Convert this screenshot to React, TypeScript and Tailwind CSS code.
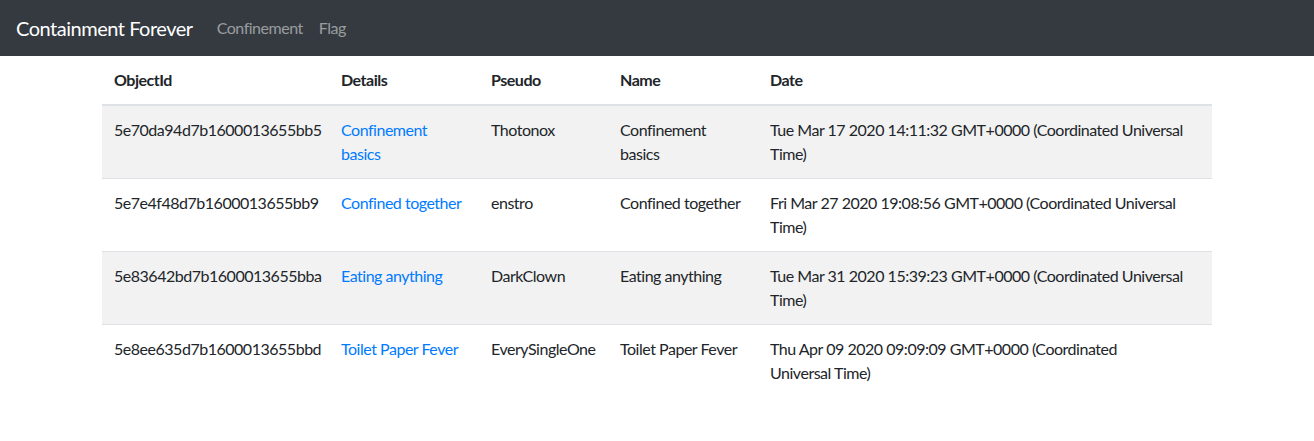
import React from 'react';

type Row = { id: string; details: string; pseudo: string; name: string; date: React.ReactNode };

const rows: Row[] = [
  { id: '5e70da94d7b1600013655bb5', details: 'Confinement basics', pseudo: 'Thotonox', name: 'Confinement basics', date: 'Tue Mar 17 2020 14:11:32 GMT+0000 (Coordinated Universal Time)' },
  { id: '5e7e4f48d7b1600013655bb9', details: 'Confined together', pseudo: 'enstro', name: 'Confined together', date: 'Fri Mar 27 2020 19:08:56 GMT+0000 (Coordinated Universal Time)' },
  { id: '5e83642bd7b1600013655bba', details: 'Eating anything', pseudo: 'DarkClown', name: 'Eating anything', date: 'Tue Mar 31 2020 15:39:23 GMT+0000 (Coordinated Universal Time)' },
  { id: '5e8ee635d7b1600013655bbd', details: 'Toilet Paper Fever', pseudo: 'EverySingleOne', name: 'Toilet Paper Fever', date: <>Thu Apr 09 2020 09:09:09 GMT+0000 (Coordinated<br />Universal Time)</> },
];

const App: React.FC = () => {
  return (
    <div className="min-h-screen bg-white text-[#212529] text-base leading-6 tracking-[-0.03em] font-['Lato',sans-serif]">
      <nav className="bg-[#343a40] h-14 px-4 flex items-center">
        <a href="#" className="text-white text-xl leading-[30px] py-[5px] mr-4">Containment Forever</a>
        <div className="flex">
          <a href="#" className="px-2 text-white/50">Confinement</a>
          <a href="#" className="px-2 text-white/50">Flag</a>
        </div>
      </nav>

      <div className="max-w-[1140px] mx-auto px-[15px]">
        <table className="w-full table-fixed border-collapse">
          <colgroup>
            <col className="w-[227px]" />
            <col className="w-[150px]" />
            <col className="w-[129px]" />
            <col className="w-[150px]" />
            <col />
          </colgroup>
          <thead>
            <tr>
              {['ObjectId', 'Details', 'Pseudo', 'Name', 'Date'].map(h => (
                <th key={h} className="p-3 text-left font-bold align-bottom border-b-2 border-[#dee2e6]">{h}</th>
              ))}
            </tr>
          </thead>
          <tbody>
            {rows.map((r, i) => (
              <tr key={r.id} className={i % 2 === 0 ? 'bg-[#f2f2f2]' : ''}>
                <td className="p-3 align-top border-t border-[#dee2e6]">{r.id}</td>
                <td className="p-3 align-top border-t border-[#dee2e6]">
                  <a href="#" className="text-[#007bff]">{r.details}</a>
                </td>
                <td className="p-3 align-top border-t border-[#dee2e6]">{r.pseudo}</td>
                <td className="p-3 align-top border-t border-[#dee2e6]">{r.name}</td>
                <td className="p-3 align-top border-t border-[#dee2e6]">{r.date}</td>
              </tr>
            ))}
          </tbody>
        </table>
      </div>
    </div>
  );
};

export default App;
